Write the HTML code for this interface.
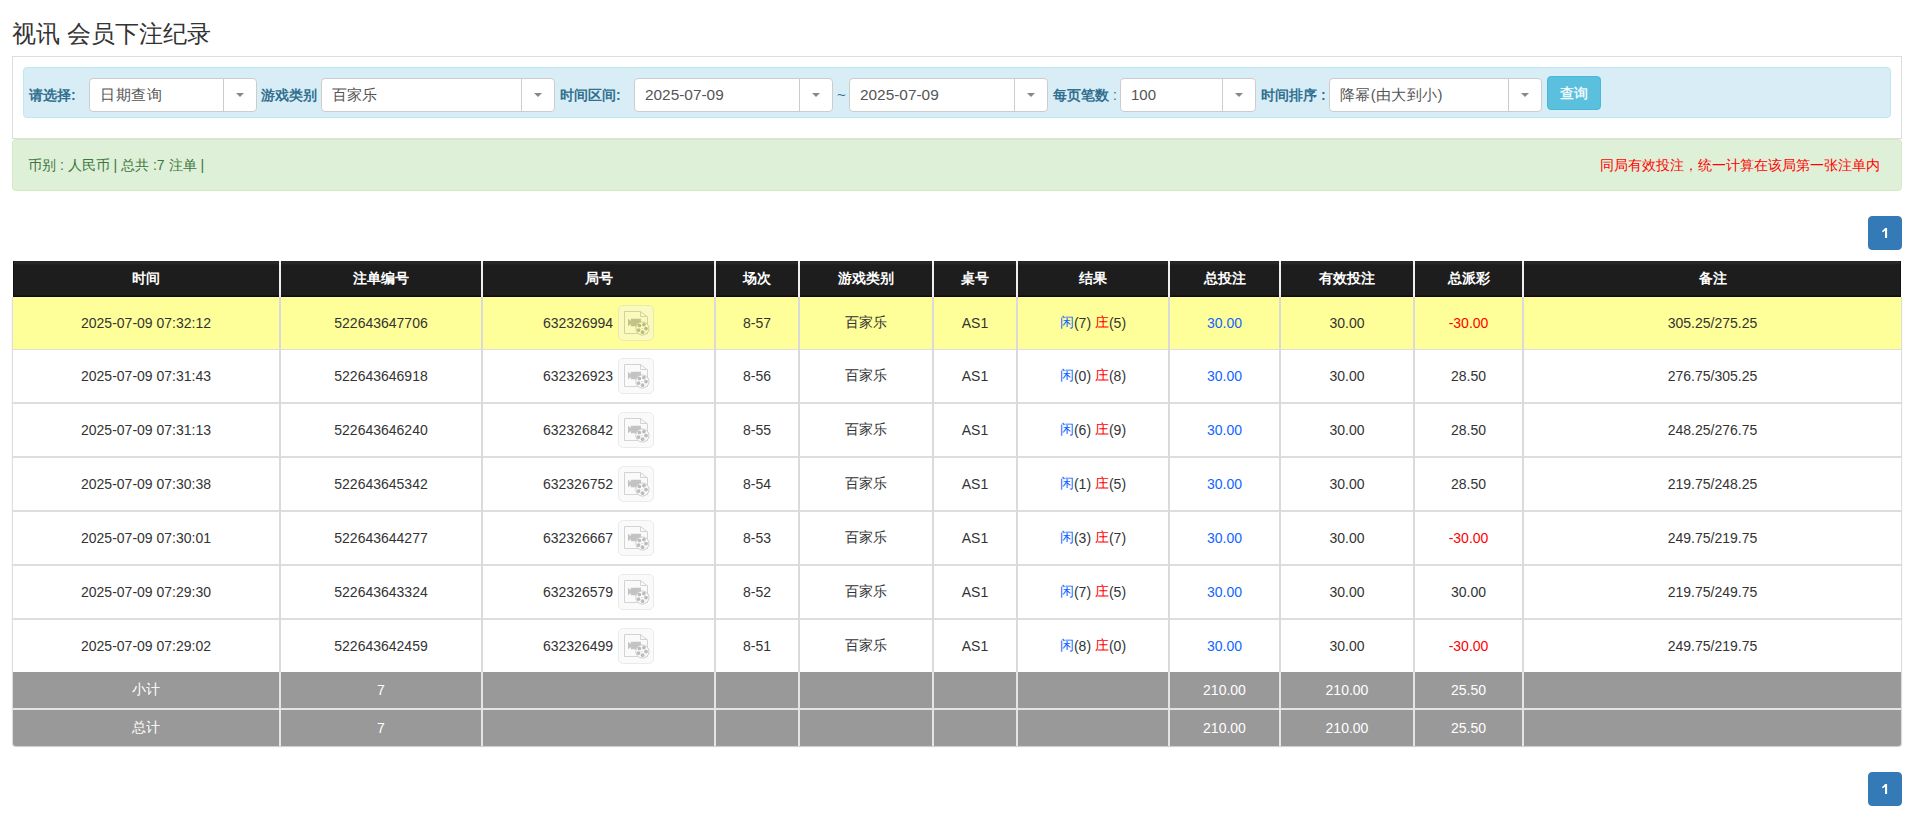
<!DOCTYPE html>
<html><head><meta charset="utf-8"><title>视讯 会员下注纪录</title>
<style>
html,body{margin:0;padding:0;background:#fff;}
body{font-family:"Liberation Sans",sans-serif;font-size:14px;color:#333;width:1916px;height:836px;position:relative;overflow:hidden;}
.a{position:absolute;}
.title{left:12px;top:17px;font-size:24px;line-height:34px;color:#333;white-space:nowrap;}
.panel{left:12px;top:56px;width:1890px;height:83px;box-sizing:border-box;border:1px solid #ddd;background:#fff;}
.info{left:23px;top:67px;width:1868px;height:51px;box-sizing:border-box;border:1px solid #bce8f1;background:#d9edf7;border-radius:4px;}
.lbl{top:78px;height:34px;line-height:34px;font-weight:bold;color:#31708f;white-space:nowrap;font-size:14px;}
.sel{top:78px;height:34px;box-sizing:border-box;border:1px solid #ccc;border-radius:4px;background:#fff;}
.sel .t{position:absolute;left:10px;top:0px;line-height:32px;color:#555;font-size:15px;white-space:nowrap;}
.sel .sep{position:absolute;top:0;bottom:0;width:1px;background:#ccc;}
.sel .car{position:absolute;top:14px;width:0;height:0;border-left:4px solid transparent;border-right:4px solid transparent;border-top:4px solid #888;}
.btn{left:1547px;top:76px;width:54px;height:34px;box-sizing:border-box;border:1px solid #46b8da;background:#5bc0de;border-radius:4px;color:#fff;text-align:center;line-height:33px;font-size:14px;-webkit-text-stroke:0.3px #fff;}
.succ{left:12px;top:139px;width:1890px;height:52px;box-sizing:border-box;border:1px solid #d6e9c6;background:#dff0d8;border-radius:4px;}
.stxt{left:28px;top:139px;line-height:52px;color:#3c763d;font-size:14px;white-space:nowrap;}
.rtxt{right:36px;top:139px;line-height:52px;color:#ff0000;font-size:14px;white-space:nowrap;}
.pg{width:34px;height:34px;box-sizing:border-box;background:#337ab7;border:1px solid #337ab7;border-radius:4px;color:#fff;text-align:center;line-height:33px;font-size:14px;-webkit-text-stroke:0.3px #fff;}
.c{position:absolute;display:flex;align-items:center;justify-content:center;white-space:nowrap;}
.hd{color:#fff;font-weight:bold;}
.ft{color:#fff;}
.blue{color:#1166ff;}
.red{color:#ff0000;}
.ic{display:inline-block;width:34px;height:34px;border:1px solid #cdcdcd;border-radius:5px;background:#f4f4f4;opacity:.41;margin-left:5px;position:relative;}
.ic svg{position:absolute;left:-1px;top:-1px;}
</style></head><body>

<div class="a title">视讯 会员下注纪录</div>
<div class="a panel"></div><div class="a info"></div>
<div class="a lbl" style="left:29px">请选择:</div>
<div class="a sel" style="left:89px;width:168px;"><span class="t"><span style="letter-spacing:0.5px">日期查询</span></span><span class="sep" style="left:133px"></span><span class="car" style="left:146px"></span></div>
<div class="a lbl" style="left:261px">游戏类别</div>
<div class="a sel" style="left:321px;width:234px;"><span class="t">百家乐</span><span class="sep" style="left:199px"></span><span class="car" style="left:212px"></span></div>
<div class="a lbl" style="left:560px">时间区间:</div>
<div class="a sel" style="left:634px;width:199px;"><span class="t"><span style="font-size:15.4px">2025-07-09</span></span><span class="sep" style="left:164px"></span><span class="car" style="left:177px"></span></div>
<div class="a lbl" style="left:837px;font-weight:normal;font-size:15px">~</div>
<div class="a sel" style="left:849px;width:199px;"><span class="t"><span style="font-size:15.4px">2025-07-09</span></span><span class="sep" style="left:164px"></span><span class="car" style="left:177px"></span></div>
<div class="a lbl" style="left:1053px">每页笔数 <span style="font-weight:normal">:</span></div>
<div class="a sel" style="left:1120px;width:136px;"><span class="t">100</span><span class="sep" style="left:101px"></span><span class="car" style="left:114px"></span></div>
<div class="a lbl" style="left:1261px">时间排序 :</div>
<div class="a sel" style="left:1329px;width:213px;"><span class="t"><span style="letter-spacing:0.35px">降幂(由大到小)</span></span><span class="sep" style="left:178px"></span><span class="car" style="left:191px"></span></div>
<div class="a btn">查询</div>
<div class="a succ"></div>
<div class="a stxt">币别 : 人民币 | 总共 :7 注单 |</div>
<div class="a rtxt">同局有效投注，统一计算在该局第一张注单内</div>
<div class="a pg" style="left:1868px;top:216px"><svg width="8" height="12" viewBox="0 0 8 12" style="position:absolute;left:12px;top:10px"><path d="M4 1H6.1V11H4V3.7C3.3 4.4 2.3 4.9 1.2 5.2V3.7C2.4 3.2 3.4 2.2 4 1Z" fill="#fff"/></svg></div>
<div class="a" style="left:12px;top:297px;width:1890px;height:449px;border-radius:0 0 4px 4px;box-shadow:0 1px 1px rgba(0,0,0,.2);background:#ddd;"></div>
<div class="a" style="left:13px;top:261px;width:1888px;height:36px;background:linear-gradient(#242424 0px,#2a2a2a 2px,#1d1d1d 4px,#1d1d1d 34px,#0c0c10 35px);box-shadow:inset 1px 0 #121212,inset -1px 0 #121212;"></div>
<div class="a" style="left:13px;top:297px;width:1888px;height:52px;background:#ffff99;"></div>
<div class="a" style="left:13px;top:350px;width:1888px;height:52px;background:#fff;"></div>
<div class="a" style="left:13px;top:404px;width:1888px;height:52px;background:#fff;"></div>
<div class="a" style="left:13px;top:458px;width:1888px;height:52px;background:#fff;"></div>
<div class="a" style="left:13px;top:512px;width:1888px;height:52px;background:#fff;"></div>
<div class="a" style="left:13px;top:566px;width:1888px;height:52px;background:#fff;"></div>
<div class="a" style="left:13px;top:620px;width:1888px;height:52px;background:#fff;"></div>
<div class="a" style="left:13px;top:672px;width:1888px;height:36px;background:#999;"></div>
<div class="a" style="left:13px;top:710px;width:1888px;height:36px;background:#999;border-radius:0 0 3px 3px;"></div>
<div class="a" style="left:13px;top:708px;width:1888px;height:2px;background:#e4e4e4;"></div>
<div class="a" style="left:279px;top:261px;width:2px;height:36px;background:#efefef;"></div>
<div class="a" style="left:279px;top:297px;width:2px;height:375px;background:#dadada;"></div>
<div class="a" style="left:279px;top:672px;width:2px;height:74px;background:#e4e4e4;"></div>
<div class="a" style="left:481px;top:261px;width:2px;height:36px;background:#efefef;"></div>
<div class="a" style="left:481px;top:297px;width:2px;height:375px;background:#dadada;"></div>
<div class="a" style="left:481px;top:672px;width:2px;height:74px;background:#e4e4e4;"></div>
<div class="a" style="left:714px;top:261px;width:2px;height:36px;background:#efefef;"></div>
<div class="a" style="left:714px;top:297px;width:2px;height:375px;background:#dadada;"></div>
<div class="a" style="left:714px;top:672px;width:2px;height:74px;background:#e4e4e4;"></div>
<div class="a" style="left:798px;top:261px;width:2px;height:36px;background:#efefef;"></div>
<div class="a" style="left:798px;top:297px;width:2px;height:375px;background:#dadada;"></div>
<div class="a" style="left:798px;top:672px;width:2px;height:74px;background:#e4e4e4;"></div>
<div class="a" style="left:932px;top:261px;width:2px;height:36px;background:#efefef;"></div>
<div class="a" style="left:932px;top:297px;width:2px;height:375px;background:#dadada;"></div>
<div class="a" style="left:932px;top:672px;width:2px;height:74px;background:#e4e4e4;"></div>
<div class="a" style="left:1016px;top:261px;width:2px;height:36px;background:#efefef;"></div>
<div class="a" style="left:1016px;top:297px;width:2px;height:375px;background:#dadada;"></div>
<div class="a" style="left:1016px;top:672px;width:2px;height:74px;background:#e4e4e4;"></div>
<div class="a" style="left:1168px;top:261px;width:2px;height:36px;background:#efefef;"></div>
<div class="a" style="left:1168px;top:297px;width:2px;height:375px;background:#dadada;"></div>
<div class="a" style="left:1168px;top:672px;width:2px;height:74px;background:#e4e4e4;"></div>
<div class="a" style="left:1279px;top:261px;width:2px;height:36px;background:#efefef;"></div>
<div class="a" style="left:1279px;top:297px;width:2px;height:375px;background:#dadada;"></div>
<div class="a" style="left:1279px;top:672px;width:2px;height:74px;background:#e4e4e4;"></div>
<div class="a" style="left:1413px;top:261px;width:2px;height:36px;background:#efefef;"></div>
<div class="a" style="left:1413px;top:297px;width:2px;height:375px;background:#dadada;"></div>
<div class="a" style="left:1413px;top:672px;width:2px;height:74px;background:#e4e4e4;"></div>
<div class="a" style="left:1522px;top:261px;width:2px;height:36px;background:#efefef;"></div>
<div class="a" style="left:1522px;top:297px;width:2px;height:375px;background:#dadada;"></div>
<div class="a" style="left:1522px;top:672px;width:2px;height:74px;background:#e4e4e4;"></div>
<div class="c" style="left:13px;top:261px;width:266px;height:36px;color:#fff;font-weight:bold;">时间</div>
<div class="c" style="left:281px;top:261px;width:200px;height:36px;color:#fff;font-weight:bold;">注单编号</div>
<div class="c" style="left:483px;top:261px;width:231px;height:36px;color:#fff;font-weight:bold;">局号</div>
<div class="c" style="left:716px;top:261px;width:82px;height:36px;color:#fff;font-weight:bold;">场次</div>
<div class="c" style="left:800px;top:261px;width:132px;height:36px;color:#fff;font-weight:bold;">游戏类别</div>
<div class="c" style="left:934px;top:261px;width:82px;height:36px;color:#fff;font-weight:bold;">桌号</div>
<div class="c" style="left:1018px;top:261px;width:150px;height:36px;color:#fff;font-weight:bold;">结果</div>
<div class="c" style="left:1170px;top:261px;width:109px;height:36px;color:#fff;font-weight:bold;">总投注</div>
<div class="c" style="left:1281px;top:261px;width:132px;height:36px;color:#fff;font-weight:bold;">有效投注</div>
<div class="c" style="left:1415px;top:261px;width:107px;height:36px;color:#fff;font-weight:bold;">总派彩</div>
<div class="c" style="left:1524px;top:261px;width:377px;height:36px;color:#fff;font-weight:bold;">备注</div>
<div class="c" style="left:13px;top:297px;width:266px;height:52px;">2025-07-09 07:32:12</div>
<div class="c" style="left:281px;top:297px;width:200px;height:52px;">522643647706</div>
<div class="c" style="left:483px;top:297px;width:231px;height:52px;">632326994<span class="ic"><svg width="36" height="36" viewBox="0 0 36 36"><path d="M6.5 6.5H22.5L29.5 12V28.5H6.5Z" fill="none" stroke="#959595" stroke-width="1"/><path d="M22.5 6.5V11.5H29.5" fill="none" stroke="#959595" stroke-width="1"/><path d="M10 13.8L12.8 16V13.8H23V21.2H12.8V19L10 21.2Z" fill="#6f6f6f"/><circle cx="24.4" cy="23.5" r="6.6" fill="#f4f4f4" stroke="#8a8a8a" stroke-width="1"/><g fill="#5e5e5e"><circle cx="21.4" cy="20.5" r="1.85"/><circle cx="25.9" cy="19.6" r="1.85"/><circle cx="28" cy="23.6" r="1.85"/><circle cx="20.6" cy="25.1" r="1.85"/><circle cx="24.6" cy="27.2" r="1.85"/><circle cx="24" cy="23.5" r="0.5"/></g></svg></span></div>
<div class="c" style="left:716px;top:297px;width:82px;height:52px;">8-57</div>
<div class="c" style="left:800px;top:297px;width:132px;height:52px;">百家乐</div>
<div class="c" style="left:934px;top:297px;width:82px;height:52px;">AS1</div>
<div class="c" style="left:1018px;top:297px;width:150px;height:52px;"><span class="blue">闲</span>(7)&nbsp;<span class="red">庄</span>(5)</div>
<div class="c" style="left:1170px;top:297px;width:109px;height:52px;"><span class="blue">30.00</span></div>
<div class="c" style="left:1281px;top:297px;width:132px;height:52px;">30.00</div>
<div class="c" style="left:1415px;top:297px;width:107px;height:52px;"><span class="red">-30.00</span></div>
<div class="c" style="left:1524px;top:297px;width:377px;height:52px;">305.25/275.25</div>
<div class="c" style="left:13px;top:350px;width:266px;height:52px;">2025-07-09 07:31:43</div>
<div class="c" style="left:281px;top:350px;width:200px;height:52px;">522643646918</div>
<div class="c" style="left:483px;top:350px;width:231px;height:52px;">632326923<span class="ic"><svg width="36" height="36" viewBox="0 0 36 36"><path d="M6.5 6.5H22.5L29.5 12V28.5H6.5Z" fill="none" stroke="#959595" stroke-width="1"/><path d="M22.5 6.5V11.5H29.5" fill="none" stroke="#959595" stroke-width="1"/><path d="M10 13.8L12.8 16V13.8H23V21.2H12.8V19L10 21.2Z" fill="#6f6f6f"/><circle cx="24.4" cy="23.5" r="6.6" fill="#f4f4f4" stroke="#8a8a8a" stroke-width="1"/><g fill="#5e5e5e"><circle cx="21.4" cy="20.5" r="1.85"/><circle cx="25.9" cy="19.6" r="1.85"/><circle cx="28" cy="23.6" r="1.85"/><circle cx="20.6" cy="25.1" r="1.85"/><circle cx="24.6" cy="27.2" r="1.85"/><circle cx="24" cy="23.5" r="0.5"/></g></svg></span></div>
<div class="c" style="left:716px;top:350px;width:82px;height:52px;">8-56</div>
<div class="c" style="left:800px;top:350px;width:132px;height:52px;">百家乐</div>
<div class="c" style="left:934px;top:350px;width:82px;height:52px;">AS1</div>
<div class="c" style="left:1018px;top:350px;width:150px;height:52px;"><span class="blue">闲</span>(0)&nbsp;<span class="red">庄</span>(8)</div>
<div class="c" style="left:1170px;top:350px;width:109px;height:52px;"><span class="blue">30.00</span></div>
<div class="c" style="left:1281px;top:350px;width:132px;height:52px;">30.00</div>
<div class="c" style="left:1415px;top:350px;width:107px;height:52px;">28.50</div>
<div class="c" style="left:1524px;top:350px;width:377px;height:52px;">276.75/305.25</div>
<div class="c" style="left:13px;top:404px;width:266px;height:52px;">2025-07-09 07:31:13</div>
<div class="c" style="left:281px;top:404px;width:200px;height:52px;">522643646240</div>
<div class="c" style="left:483px;top:404px;width:231px;height:52px;">632326842<span class="ic"><svg width="36" height="36" viewBox="0 0 36 36"><path d="M6.5 6.5H22.5L29.5 12V28.5H6.5Z" fill="none" stroke="#959595" stroke-width="1"/><path d="M22.5 6.5V11.5H29.5" fill="none" stroke="#959595" stroke-width="1"/><path d="M10 13.8L12.8 16V13.8H23V21.2H12.8V19L10 21.2Z" fill="#6f6f6f"/><circle cx="24.4" cy="23.5" r="6.6" fill="#f4f4f4" stroke="#8a8a8a" stroke-width="1"/><g fill="#5e5e5e"><circle cx="21.4" cy="20.5" r="1.85"/><circle cx="25.9" cy="19.6" r="1.85"/><circle cx="28" cy="23.6" r="1.85"/><circle cx="20.6" cy="25.1" r="1.85"/><circle cx="24.6" cy="27.2" r="1.85"/><circle cx="24" cy="23.5" r="0.5"/></g></svg></span></div>
<div class="c" style="left:716px;top:404px;width:82px;height:52px;">8-55</div>
<div class="c" style="left:800px;top:404px;width:132px;height:52px;">百家乐</div>
<div class="c" style="left:934px;top:404px;width:82px;height:52px;">AS1</div>
<div class="c" style="left:1018px;top:404px;width:150px;height:52px;"><span class="blue">闲</span>(6)&nbsp;<span class="red">庄</span>(9)</div>
<div class="c" style="left:1170px;top:404px;width:109px;height:52px;"><span class="blue">30.00</span></div>
<div class="c" style="left:1281px;top:404px;width:132px;height:52px;">30.00</div>
<div class="c" style="left:1415px;top:404px;width:107px;height:52px;">28.50</div>
<div class="c" style="left:1524px;top:404px;width:377px;height:52px;">248.25/276.75</div>
<div class="c" style="left:13px;top:458px;width:266px;height:52px;">2025-07-09 07:30:38</div>
<div class="c" style="left:281px;top:458px;width:200px;height:52px;">522643645342</div>
<div class="c" style="left:483px;top:458px;width:231px;height:52px;">632326752<span class="ic"><svg width="36" height="36" viewBox="0 0 36 36"><path d="M6.5 6.5H22.5L29.5 12V28.5H6.5Z" fill="none" stroke="#959595" stroke-width="1"/><path d="M22.5 6.5V11.5H29.5" fill="none" stroke="#959595" stroke-width="1"/><path d="M10 13.8L12.8 16V13.8H23V21.2H12.8V19L10 21.2Z" fill="#6f6f6f"/><circle cx="24.4" cy="23.5" r="6.6" fill="#f4f4f4" stroke="#8a8a8a" stroke-width="1"/><g fill="#5e5e5e"><circle cx="21.4" cy="20.5" r="1.85"/><circle cx="25.9" cy="19.6" r="1.85"/><circle cx="28" cy="23.6" r="1.85"/><circle cx="20.6" cy="25.1" r="1.85"/><circle cx="24.6" cy="27.2" r="1.85"/><circle cx="24" cy="23.5" r="0.5"/></g></svg></span></div>
<div class="c" style="left:716px;top:458px;width:82px;height:52px;">8-54</div>
<div class="c" style="left:800px;top:458px;width:132px;height:52px;">百家乐</div>
<div class="c" style="left:934px;top:458px;width:82px;height:52px;">AS1</div>
<div class="c" style="left:1018px;top:458px;width:150px;height:52px;"><span class="blue">闲</span>(1)&nbsp;<span class="red">庄</span>(5)</div>
<div class="c" style="left:1170px;top:458px;width:109px;height:52px;"><span class="blue">30.00</span></div>
<div class="c" style="left:1281px;top:458px;width:132px;height:52px;">30.00</div>
<div class="c" style="left:1415px;top:458px;width:107px;height:52px;">28.50</div>
<div class="c" style="left:1524px;top:458px;width:377px;height:52px;">219.75/248.25</div>
<div class="c" style="left:13px;top:512px;width:266px;height:52px;">2025-07-09 07:30:01</div>
<div class="c" style="left:281px;top:512px;width:200px;height:52px;">522643644277</div>
<div class="c" style="left:483px;top:512px;width:231px;height:52px;">632326667<span class="ic"><svg width="36" height="36" viewBox="0 0 36 36"><path d="M6.5 6.5H22.5L29.5 12V28.5H6.5Z" fill="none" stroke="#959595" stroke-width="1"/><path d="M22.5 6.5V11.5H29.5" fill="none" stroke="#959595" stroke-width="1"/><path d="M10 13.8L12.8 16V13.8H23V21.2H12.8V19L10 21.2Z" fill="#6f6f6f"/><circle cx="24.4" cy="23.5" r="6.6" fill="#f4f4f4" stroke="#8a8a8a" stroke-width="1"/><g fill="#5e5e5e"><circle cx="21.4" cy="20.5" r="1.85"/><circle cx="25.9" cy="19.6" r="1.85"/><circle cx="28" cy="23.6" r="1.85"/><circle cx="20.6" cy="25.1" r="1.85"/><circle cx="24.6" cy="27.2" r="1.85"/><circle cx="24" cy="23.5" r="0.5"/></g></svg></span></div>
<div class="c" style="left:716px;top:512px;width:82px;height:52px;">8-53</div>
<div class="c" style="left:800px;top:512px;width:132px;height:52px;">百家乐</div>
<div class="c" style="left:934px;top:512px;width:82px;height:52px;">AS1</div>
<div class="c" style="left:1018px;top:512px;width:150px;height:52px;"><span class="blue">闲</span>(3)&nbsp;<span class="red">庄</span>(7)</div>
<div class="c" style="left:1170px;top:512px;width:109px;height:52px;"><span class="blue">30.00</span></div>
<div class="c" style="left:1281px;top:512px;width:132px;height:52px;">30.00</div>
<div class="c" style="left:1415px;top:512px;width:107px;height:52px;"><span class="red">-30.00</span></div>
<div class="c" style="left:1524px;top:512px;width:377px;height:52px;">249.75/219.75</div>
<div class="c" style="left:13px;top:566px;width:266px;height:52px;">2025-07-09 07:29:30</div>
<div class="c" style="left:281px;top:566px;width:200px;height:52px;">522643643324</div>
<div class="c" style="left:483px;top:566px;width:231px;height:52px;">632326579<span class="ic"><svg width="36" height="36" viewBox="0 0 36 36"><path d="M6.5 6.5H22.5L29.5 12V28.5H6.5Z" fill="none" stroke="#959595" stroke-width="1"/><path d="M22.5 6.5V11.5H29.5" fill="none" stroke="#959595" stroke-width="1"/><path d="M10 13.8L12.8 16V13.8H23V21.2H12.8V19L10 21.2Z" fill="#6f6f6f"/><circle cx="24.4" cy="23.5" r="6.6" fill="#f4f4f4" stroke="#8a8a8a" stroke-width="1"/><g fill="#5e5e5e"><circle cx="21.4" cy="20.5" r="1.85"/><circle cx="25.9" cy="19.6" r="1.85"/><circle cx="28" cy="23.6" r="1.85"/><circle cx="20.6" cy="25.1" r="1.85"/><circle cx="24.6" cy="27.2" r="1.85"/><circle cx="24" cy="23.5" r="0.5"/></g></svg></span></div>
<div class="c" style="left:716px;top:566px;width:82px;height:52px;">8-52</div>
<div class="c" style="left:800px;top:566px;width:132px;height:52px;">百家乐</div>
<div class="c" style="left:934px;top:566px;width:82px;height:52px;">AS1</div>
<div class="c" style="left:1018px;top:566px;width:150px;height:52px;"><span class="blue">闲</span>(7)&nbsp;<span class="red">庄</span>(5)</div>
<div class="c" style="left:1170px;top:566px;width:109px;height:52px;"><span class="blue">30.00</span></div>
<div class="c" style="left:1281px;top:566px;width:132px;height:52px;">30.00</div>
<div class="c" style="left:1415px;top:566px;width:107px;height:52px;">30.00</div>
<div class="c" style="left:1524px;top:566px;width:377px;height:52px;">219.75/249.75</div>
<div class="c" style="left:13px;top:620px;width:266px;height:52px;">2025-07-09 07:29:02</div>
<div class="c" style="left:281px;top:620px;width:200px;height:52px;">522643642459</div>
<div class="c" style="left:483px;top:620px;width:231px;height:52px;">632326499<span class="ic"><svg width="36" height="36" viewBox="0 0 36 36"><path d="M6.5 6.5H22.5L29.5 12V28.5H6.5Z" fill="none" stroke="#959595" stroke-width="1"/><path d="M22.5 6.5V11.5H29.5" fill="none" stroke="#959595" stroke-width="1"/><path d="M10 13.8L12.8 16V13.8H23V21.2H12.8V19L10 21.2Z" fill="#6f6f6f"/><circle cx="24.4" cy="23.5" r="6.6" fill="#f4f4f4" stroke="#8a8a8a" stroke-width="1"/><g fill="#5e5e5e"><circle cx="21.4" cy="20.5" r="1.85"/><circle cx="25.9" cy="19.6" r="1.85"/><circle cx="28" cy="23.6" r="1.85"/><circle cx="20.6" cy="25.1" r="1.85"/><circle cx="24.6" cy="27.2" r="1.85"/><circle cx="24" cy="23.5" r="0.5"/></g></svg></span></div>
<div class="c" style="left:716px;top:620px;width:82px;height:52px;">8-51</div>
<div class="c" style="left:800px;top:620px;width:132px;height:52px;">百家乐</div>
<div class="c" style="left:934px;top:620px;width:82px;height:52px;">AS1</div>
<div class="c" style="left:1018px;top:620px;width:150px;height:52px;"><span class="blue">闲</span>(8)&nbsp;<span class="red">庄</span>(0)</div>
<div class="c" style="left:1170px;top:620px;width:109px;height:52px;"><span class="blue">30.00</span></div>
<div class="c" style="left:1281px;top:620px;width:132px;height:52px;">30.00</div>
<div class="c" style="left:1415px;top:620px;width:107px;height:52px;"><span class="red">-30.00</span></div>
<div class="c" style="left:1524px;top:620px;width:377px;height:52px;">249.75/219.75</div>
<div class="c" style="left:13px;top:672px;width:266px;height:36px;color:#fff;">小计</div>
<div class="c" style="left:281px;top:672px;width:200px;height:36px;color:#fff;">7</div>
<div class="c" style="left:1170px;top:672px;width:109px;height:36px;color:#fff;">210.00</div>
<div class="c" style="left:1281px;top:672px;width:132px;height:36px;color:#fff;">210.00</div>
<div class="c" style="left:1415px;top:672px;width:107px;height:36px;color:#fff;">25.50</div>
<div class="c" style="left:13px;top:710px;width:266px;height:36px;color:#fff;">总计</div>
<div class="c" style="left:281px;top:710px;width:200px;height:36px;color:#fff;">7</div>
<div class="c" style="left:1170px;top:710px;width:109px;height:36px;color:#fff;">210.00</div>
<div class="c" style="left:1281px;top:710px;width:132px;height:36px;color:#fff;">210.00</div>
<div class="c" style="left:1415px;top:710px;width:107px;height:36px;color:#fff;">25.50</div>
<div class="a pg" style="left:1868px;top:772px"><svg width="8" height="12" viewBox="0 0 8 12" style="position:absolute;left:12px;top:10px"><path d="M4 1H6.1V11H4V3.7C3.3 4.4 2.3 4.9 1.2 5.2V3.7C2.4 3.2 3.4 2.2 4 1Z" fill="#fff"/></svg></div>
</body></html>
